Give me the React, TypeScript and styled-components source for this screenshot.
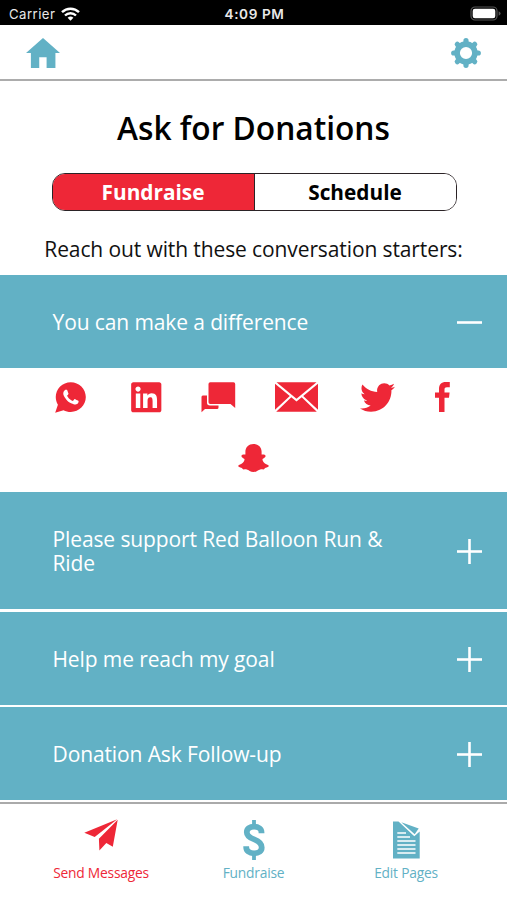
import React from "react";
import styled, { createGlobalStyle } from "styled-components";
import { FaLinkedin, FaTwitter } from "react-icons/fa";
import { IoLogoWhatsapp } from "react-icons/io";

const TEAL = "#62b1c5";
const RED = "#ee2737";

const GlobalStyle = createGlobalStyle`
  *, *::before, *::after { box-sizing: border-box; }
  body { margin: 0; background: #fff; }
  button { border: 0; padding: 0; background: none; font: inherit; color: inherit; cursor: pointer; }
  svg { display: block; flex: none; }
`;

const Screen = styled.div`
  width: 507px;
  height: 900px;
  display: flex;
  flex-direction: column;
  overflow: hidden;
  background: #fff;
  color: #000;
  font-family: "Open Sans", sans-serif;
  white-space: nowrap;
`;

const StatusBar = styled.div`
  height: 25px;
  flex: none;
  display: grid;
  grid-template-columns: 1fr auto 1fr;
  align-items: center;
  padding: 2px 6px 0 9px;
  background: #000;
  color: #e8e8e8;
  font-family: Inter, sans-serif;
  font-size: 13.2px;
`;

const Carrier = styled.div`
  display: flex;
  align-items: center;
  gap: 6px;
  letter-spacing: 0.45px;
`;

const Clock = styled.div`
  padding-right: 1px;
  font-size: 13.6px;
  font-weight: 600;
  letter-spacing: 0.6px;
`;

const BatterySlot = styled.div`
  display: flex;
  justify-content: flex-end;
`;

const Header = styled.header`
  height: 56px;
  flex: none;
  display: flex;
  align-items: center;
  justify-content: space-between;
  padding: 1px 26px 0;
  border-bottom: 2px solid #acacac;
`;

const Title = styled.h1`
  margin: 24px 0 0;
  height: 46px;
  line-height: 46px;
  text-align: center;
  font-size: 31.7px;
  font-weight: 600;
`;

const Segmented = styled.div`
  width: 405px;
  height: 38px;
  margin: 22px 0 0 51.5px;
  flex: none;
  display: flex;
  border: 1.5px solid #2b2326;
  border-radius: 13px;
  overflow: hidden;
`;

const Segment = styled.button<{ $active?: boolean }>`
  flex: 1;
  font-size: 20.8px;
  font-weight: 700;
  line-height: 34px;
  color: ${(p) => (p.$active ? "#fff" : "#000")};
  background: ${(p) => (p.$active ? RED : "#fff")};
  & + & { border-left: 1px solid #2b2326; }
`;

const Intro = styled.p`
  margin: 23px 0 0;
  height: 30px;
  line-height: 31px;
  flex: none;
  text-align: center;
  font-size: 21px;
  letter-spacing: -0.11px;
  color: #111;
`;

const Accordion = styled.main`
  margin-top: 10.5px;
  flex: none;
  display: flex;
  flex-direction: column;
`;

const Panel = styled.button<{ $tall?: boolean; $gap?: boolean }>`
  width: 100%;
  height: ${(p) => (p.$tall ? 117.5 : 93)}px;
  margin-top: ${(p) => (p.$gap ? 2.5 : 0)}px;
  display: flex;
  align-items: center;
  justify-content: space-between;
  padding: 2px 25px 0 52.5px;
  background: ${TEAL};
  color: #fff;
  font-size: 21px;
  letter-spacing: -0.11px;
  line-height: 24.5px;
  text-align: left;
`;

const PanelLabel = styled.span`
  width: 350px;
  white-space: normal;
`;

const ShareGrid = styled.div`
  height: 124px;
  color: ${RED};
`;

const ShareRow = styled.div<{ $centered?: boolean }>`
  height: ${(p) => (p.$centered ? 62 : 59)}px;
  display: flex;
  align-items: center;
  justify-content: ${(p) => (p.$centered ? "center" : "flex-start")};
  padding-left: ${(p) => (p.$centered ? 0 : 53)}px;
`;

const ShareIcon = styled.button<{ $lead?: number }>`
  margin-left: ${(p) => p.$lead ?? 0}px;
  display: flex;
`;

const TabBar = styled.nav`
  flex: 1;
  margin-top: 2px;
  border-top: 2px solid #aaa;
  display: grid;
  grid-template-columns: repeat(3, 152.5px);
  justify-content: center;
`;

const Tab = styled.button<{ $active?: boolean }>`
  display: flex;
  flex-direction: column;
  align-items: center;
  justify-content: flex-start;
  padding-top: 14px;
  font-size: 13.8px;
  letter-spacing: -0.22px;
  color: ${(p) => (p.$active ? RED : TEAL)};
`;

const TabIcon = styled.span<{ $raised?: boolean }>`
  height: 44px;
  padding-bottom: ${(p) => (p.$raised ? 10 : 0)}px;
  display: flex;
  align-items: center;
`;

const TabLabel = styled.span`
  margin-top: 1px;
  line-height: 20px;
`;

const WifiIcon = () => (
  <svg width="19" height="14" viewBox="0 0 19 14" fill="none" stroke="#fff" strokeWidth="2.4">
    <path d="M1 5.2a12.2 12.2 0 0 1 17 0" />
    <path d="M4 8.5a7.8 7.8 0 0 1 11 0" />
    <path d="M9.5 13.8 6.6 10.8a4.2 4.2 0 0 1 5.8 0z" fill="#fff" stroke="none" />
  </svg>
);

const BatteryIcon = () => (
  <svg width="31" height="15" viewBox="0 0 31 15">
    <rect x="1" y="1" width="26" height="13" rx="4" fill="none" stroke="#555" strokeWidth="1.2" />
    <rect x="2.7" y="2.7" width="22.6" height="9.6" rx="2.2" fill="#fff" />
    <path d="M28.6 5.2q2 .8 2 2.3t-2 2.3z" fill="#555" />
  </svg>
);

const HomeIcon = () => (
  <svg width="34" height="30" viewBox="48 64 416 384" preserveAspectRatio="none" fill={TEAL}>
    <path d="M210 448V310h90v138h108V256h56L256 64 48 256h60v192z" />
  </svg>
);

const GearIcon = () => (
  <svg width="30" height="30" viewBox="-15 -15 30 30" stroke={TEAL} fill="none">
    <circle r="8.9" strokeWidth="5.6" />
    <g strokeWidth="5.2" strokeLinecap="round">
      <path d="M0-10.5V-12.3M0 10.5V12.3M-10.5 0H-12.3M10.5 0H12.3" />
      <path d="M7.6-7.6 8.7-8.7M7.6 7.6 8.7 8.7M-7.6 7.6-8.7 8.7M-7.6-7.6-8.7-8.7" />
    </g>
  </svg>
);

const ToggleGlyph = ({ open = false }: { open?: boolean }) => (
  <svg width="25" height="25" viewBox="0 0 25 25" stroke="#fff" strokeWidth="2.6">
    <path d="M0 12.5H25" />
    {!open && <path d="M12.5 0V25" />}
  </svg>
);

const ChatIcon = () => (
  <svg width="35" height="31" viewBox="0 0 35 31" fill="currentColor">
    <path d="M6 13.5H1.8Q.5 13.5.5 15V30.3L4 27H16Q17.5 27 17.5 25.5V23.5H9Q6 23.5 6 20.8z" />
    <path d="M9.3.2H32.5Q34.2.2 34.2 2V26L29.5 22H9.3Q7.5 22 7.5 20.3V2Q7.5.2 9.3.2z" />
  </svg>
);

const MailIcon = () => (
  <svg width="43" height="30" viewBox="0 0 43 30" fill="currentColor">
    <path d="M1.5.3H41.5L21.5 16.7z" />
    <path d="M0 1.8 14.8 14 0 27.8zM43 1.8 28.2 14 43 27.8z" />
    <path d="M16.3 15.3 21.5 19.6 26.7 15.3 41.8 29.7H1.2z" />
  </svg>
);

const FacebookIcon = () => (
  <svg width="15" height="30" viewBox="0 0 15 30" fill="currentColor">
    <path d="M4 30V15.8H0V10.5H4V7C4 2.6 6.4 0 10.8 0H14.8V5.2H12C10.2 5.2 9.5 6 9.5 7.6V10.5H14.6L14 15.8H9.5V30z" />
  </svg>
);

const SnapchatIcon = () => (
  <svg width="31" height="28" viewBox="0 0 31 28" fill="currentColor">
    <path d="M15.5 0C20.3 0 23.6 3.3 23.6 7.8V10.6C25 10.4 27.4 10.4 27.6 12C27.7 13.8 25.5 14.3 24.5 15.1C24.3 17.6 27 20.2 30 21C31 21.3 30.8 22.7 29.8 23.1C28.4 23.7 26.8 23.8 26.3 25.1C25.9 25.9 24 25.2 22.4 25.4C20.1 25.8 18.7 28 15.5 28S10.9 25.8 8.6 25.4C7 25.2 5.1 25.9 4.7 25.1C4.2 23.8 2.6 23.7 1.2 23.1C.2 22.7 0 21.3 1 21C4 20.2 6.7 17.6 6.5 15.1C5.5 14.3 3.3 13.8 3.4 12C3.6 10.4 6 10.4 7.4 10.6V7.8C7.4 3.3 10.7 0 15.5 0z" />
  </svg>
);

const PlaneIcon = () => (
  <svg width="34" height="32" viewBox="0 0 34 32" fill="currentColor">
    <path d="M.3 13.7 33.2.3 10.7 18z" />
    <path d="M33.7.8 28.8 27.7 22.3 24.1 15.4 31.6 14.9 19.7z" />
  </svg>
);

const DollarIcon = () => (
  <svg width="22" height="40" viewBox="0 0 22 40" fill="none" stroke="currentColor">
    <path d="M11 0V6M11 34V40" strokeWidth="3.8" />
    <path
      d="M18.5 13.2V12.4C18.5 8.8 15.6 6.7 11.1 6.7C6.7 6.7 3.8 8.8 3.8 12.2C3.8 15.8 6.3 17.6 11.2 19.4C16.3 21.3 18.7 23.4 18.7 27.4C18.7 31.2 15.8 33.3 11.1 33.3C6.1 33.3 3.2 30.9 3.2 27V26.2"
      strokeWidth="5.8"
    />
  </svg>
);

const PagesIcon = () => (
  <svg width="27" height="38" viewBox="0 0 27 38" fill="none">
    <path d="M0 .5H5.5L21.3 15.3 26.7 10.5V37.5H0z" fill="currentColor" />
    <path d="M8.3 1.3 25.7 7.5 21.7 13.3z" fill="currentColor" />
    <path
      d="M4.3 12H13M4.3 16H17M4.3 20H22.5M4.3 24H22.5M4.3 28H22.5M4.3 32H22.5"
      stroke="#fff"
      strokeWidth="1.5"
    />
  </svg>
);

const App = () => (
  <>
    <GlobalStyle />
    <Screen>
      <StatusBar>
        <Carrier>
          Carrier <WifiIcon />
        </Carrier>
        <Clock>4:09 PM</Clock>
        <BatterySlot>
          <BatteryIcon />
        </BatterySlot>
      </StatusBar>
      <Header>
        <HomeIcon />
        <GearIcon />
      </Header>
      <Title>Ask for Donations</Title>
      <Segmented>
        <Segment $active>Fundraise</Segment>
        <Segment>Schedule</Segment>
      </Segmented>
      <Intro>Reach out with these conversation starters:</Intro>
      <Accordion>
        <Panel>
          <PanelLabel>You can make a difference</PanelLabel>
          <ToggleGlyph open />
        </Panel>
        <ShareGrid>
          <ShareRow>
            <ShareIcon><IoLogoWhatsapp size={35} /></ShareIcon>
            <ShareIcon $lead={41}><FaLinkedin size={34.5} /></ShareIcon>
            <ShareIcon $lead={37.5}><ChatIcon /></ShareIcon>
            <ShareIcon $lead={39}><MailIcon /></ShareIcon>
            <ShareIcon $lead={41.5}><FaTwitter size={35} /></ShareIcon>
            <ShareIcon $lead={40.5}><FacebookIcon /></ShareIcon>
          </ShareRow>
          <ShareRow $centered>
            <ShareIcon><SnapchatIcon /></ShareIcon>
          </ShareRow>
        </ShareGrid>
        <Panel $tall>
          <PanelLabel>Please support Red Balloon Run &amp; Ride</PanelLabel>
          <ToggleGlyph />
        </Panel>
        <Panel $gap>
          <PanelLabel>Help me reach my goal</PanelLabel>
          <ToggleGlyph />
        </Panel>
        <Panel $gap>
          <PanelLabel>Donation Ask Follow-up</PanelLabel>
          <ToggleGlyph />
        </Panel>
      </Accordion>
      <TabBar>
        <Tab $active>
          <TabIcon $raised><PlaneIcon /></TabIcon>
          <TabLabel>Send Messages</TabLabel>
        </Tab>
        <Tab>
          <TabIcon><DollarIcon /></TabIcon>
          <TabLabel>Fundraise</TabLabel>
        </Tab>
        <Tab>
          <TabIcon><PagesIcon /></TabIcon>
          <TabLabel>Edit Pages</TabLabel>
        </Tab>
      </TabBar>
    </Screen>
  </>
);

export default App;
